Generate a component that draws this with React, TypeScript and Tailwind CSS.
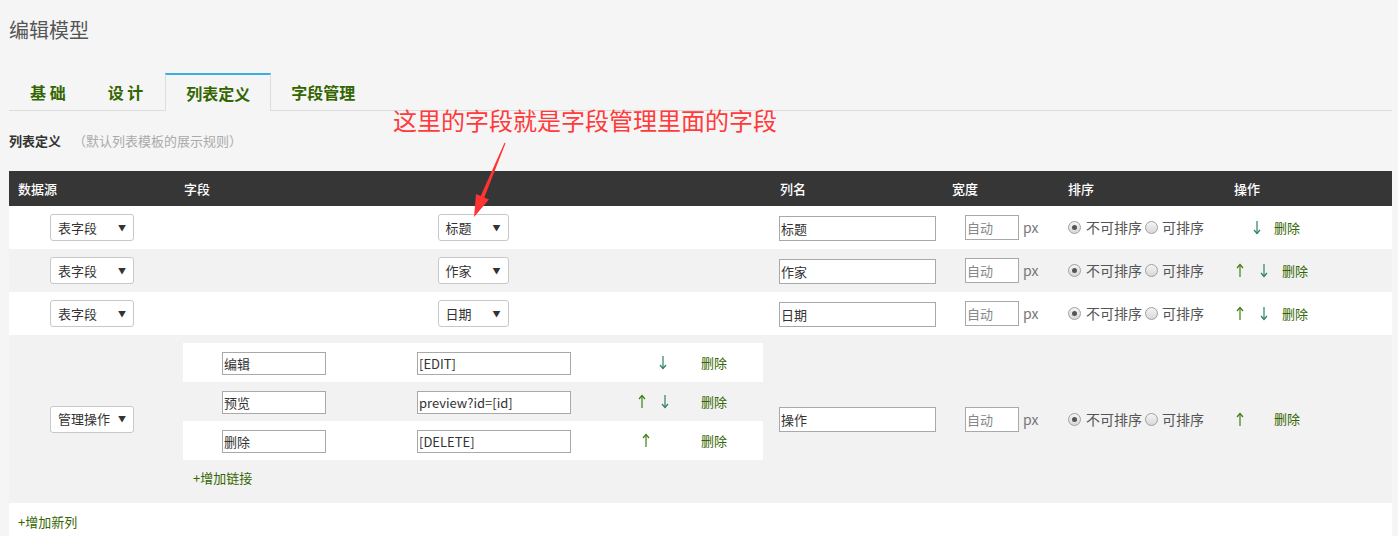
import React from "react";

const cols = "grid grid-cols-[166px_596px_172px_116px_166px_1fr] items-center";
const green = "text-[#336600]";

function Select({ label, w }: { label: string; w: string }) {
  return (
    <div
      className={`${w} h-[27px] flex items-center justify-between pl-[7px] pr-[7px] bg-white border border-[#c8c8c8] rounded-[3px] text-[13px] text-[#333]`}
    >
      <span>{label}</span>
      <span className="text-[8px] text-[#333]">▼</span>
    </div>
  );
}

function TextBox({ value, w, h = "h-[25px]", muted }: { value: string; w: string; h?: string; muted?: boolean }) {
  return (
    <input
      readOnly
      value={value}
      className={`${w} ${h} px-[1px] bg-white border border-[#a9a9a9] text-[13px] outline-none ${muted ? "text-[#888]" : "text-[#333]"}`}
    />
  );
}

function Radio({ checked }: { checked?: boolean }) {
  return (
    <span className="w-[13px] h-[13px] rounded-full border border-[#a0a0a0] bg-gradient-to-b from-[#f4f4f4] to-[#d8d8d8] flex items-center justify-center">
      {checked && <span className="w-[5px] h-[5px] rounded-full bg-[#555]" />}
    </span>
  );
}

// thin arrow like the ↑ / ↓ glyphs in the table
function Arrow({ up }: { up?: boolean }) {
  return (
    <svg width="8" height="15" viewBox="0 0 8 15" className="block">
      {up ? (
        <g stroke="#3f7f12" strokeWidth="1.2" fill="none">
          <line x1="4" y1="1.5" x2="4" y2="14" />
          <polyline points="1,5 4,1.5 7,5" />
        </g>
      ) : (
        <g stroke="#2f7f6a" strokeWidth="1.2" fill="none">
          <line x1="4" y1="1" x2="4" y2="13.5" />
          <polyline points="1,10 4,13.5 7,10" />
        </g>
      )}
    </svg>
  );
}

function WidthSort() {
  return (
    <>
      <div className="flex items-center pl-[22px]">
        <TextBox value="自动" w="w-[54px]" muted />
        <span className="ml-[4px] text-[14px] text-[#777]">px</span>
      </div>
      <div className="flex items-center pl-[9px] text-[14px] text-[#555]">
        <Radio checked />
        <span className="ml-[5px]">不可排序</span>
        <span className="ml-[3px]">
          <Radio />
        </span>
        <span className="ml-[4px]">可排序</span>
      </div>
    </>
  );
}

function MainRow({ bg, field, name, ops }: { bg: string; field: string; name: string; ops: React.ReactNode }) {
  return (
    <div className={`${cols} h-[43px] ${bg}`}>
      <div className="flex justify-center">
        <Select label="表字段" w="w-[84px]" />
      </div>
      <div className="flex justify-center">
        <Select label={field} w="w-[71px]" />
      </div>
      <div className="pl-[8px]">
        <TextBox value={name} w="w-[157px]" />
      </div>
      <WidthSort />
      <div className="flex items-center text-[13px]">{ops}</div>
    </div>
  );
}

function SubRow({ bg, name, url, arrows }: { bg: string; name: string; url: string; arrows: React.ReactNode }) {
  return (
    <div className={`flex items-center h-[39px] ${bg}`}>
      <div className="pl-[39px]">
        <TextBox value={name} w="w-[104px]" h="h-[23px]" />
      </div>
      <div className="pl-[91px]">
        <TextBox value={url} w="w-[154px]" h="h-[23px]" />
      </div>
      <div className="w-[130px] flex items-center">{arrows}</div>
      <span className={`text-[13px] ${green}`}>删除</span>
    </div>
  );
}

export default function App() {
  return (
    <div className="relative min-h-[536px] bg-[#f5f5f5] pl-[9px] pr-[6px] pt-[16px] font-['Noto_Sans_CJK_SC',sans-serif] overflow-hidden">
      <h1 className="text-[20px] leading-[28px] text-[#555] font-normal">编辑模型</h1>

      <div className="mt-[29px] flex border-b border-[#dddddd] h-[38px]">
        <div className={`px-[21px] flex items-center text-[16px] font-bold ${green}`}>基 础</div>
        <div className={`pl-[21px] pr-[22px] flex items-center text-[16px] font-bold ${green}`}>设 计</div>
        <div className={`px-[20px] -mb-px h-[38px] flex items-center text-[16px] font-bold bg-[#f5f5f5] border-t-2 border-t-[#3aaee0] border-x border-x-[#dddddd] ${green}`}>
          列表定义
        </div>
        <div className={`px-[20px] flex items-center text-[16px] font-bold ${green}`}>字段管理</div>
      </div>

      <div className="mt-[20px] flex items-center h-[20px] text-[13px]">
        <span className="font-bold text-[#333]">列表定义</span>
        <span className="ml-[12px] text-[#aaa]">（默认列表模板的展示规则）</span>
      </div>

      <div className="mt-[20px]">
        <div className={`${cols} h-[35px] bg-[#363636] text-white text-[13px] font-medium`}>
          <span className="pl-[9px]">数据源</span>
          <span className="pl-[9px]">字段</span>
          <span className="pl-[9px]">列名</span>
          <span className="pl-[9px]">宽度</span>
          <span className="pl-[9px]">排序</span>
          <span className="pl-[9px]">操作</span>
        </div>

        <MainRow
          bg="bg-white"
          field="标题"
          name="标题"
          ops={
            <>
              <span className="ml-[28px]">
                <Arrow />
              </span>
              <span className={`ml-[13px] ${green}`}>删除</span>
            </>
          }
        />
        <MainRow
          bg="bg-[#f2f2f2]"
          field="作家"
          name="作家"
          ops={
            <>
              <span className="ml-[11px]">
                <Arrow up />
              </span>
              <span className="ml-[16px]">
                <Arrow />
              </span>
              <span className={`ml-[14px] ${green}`}>删除</span>
            </>
          }
        />
        <MainRow
          bg="bg-white"
          field="日期"
          name="日期"
          ops={
            <>
              <span className="ml-[11px]">
                <Arrow up />
              </span>
              <span className="ml-[16px]">
                <Arrow />
              </span>
              <span className={`ml-[14px] ${green}`}>删除</span>
            </>
          }
        />

        <div className={`${cols} h-[168px] bg-[#f2f2f2]`}>
          <div className="flex justify-center">
            <Select label="管理操作" w="w-[84px]" />
          </div>
          <div className="h-full px-[8px] pt-[8px] flex flex-col">
            <SubRow
              bg="bg-white"
              name="编辑"
              url="[EDIT]"
              arrows={
                <span className="ml-[88px]">
                  <Arrow />
                </span>
              }
            />
            <SubRow
              bg=""
              name="预览"
              url="preview?id=[id]"
              arrows={
                <>
                  <span className="ml-[67px]">
                    <Arrow up />
                  </span>
                  <span className="ml-[15px]">
                    <Arrow />
                  </span>
                </>
              }
            />
            <SubRow
              bg="bg-white"
              name="删除"
              url="[DELETE]"
              arrows={
                <span className="ml-[71px]">
                  <Arrow up />
                </span>
              }
            />
            <div className={`mt-[9px] pl-[10px] h-[18px] flex items-center text-[13px] ${green}`}>+增加链接</div>
          </div>
          <div className="pl-[8px]">
            <TextBox value="操作" w="w-[157px]" />
          </div>
          <WidthSort />
          <div className="flex items-center text-[13px]">
            <span className="ml-[11px]">
              <Arrow up />
            </span>
            <span className={`ml-[30px] ${green}`}>删除</span>
          </div>
        </div>

        <div className={`h-[40px] bg-white pl-[9px] pt-[9px] text-[13px] ${green}`}>+增加新列</div>
      </div>

      <div className="absolute left-[393px] top-[106px] text-[24px] leading-[28px] text-[#ff3b3b] whitespace-nowrap">
        这里的字段就是字段管理里面的字段
      </div>
      <svg className="absolute left-0 top-0 pointer-events-none" width="1398" height="536">
        <polygon
          points="505.5,143.2 484.3,197.5 489,199.4 474,217 476,194 480.7,195.9 504.5,142.8"
          fill="#ff3333"
        />
      </svg>
    </div>
  );
}
